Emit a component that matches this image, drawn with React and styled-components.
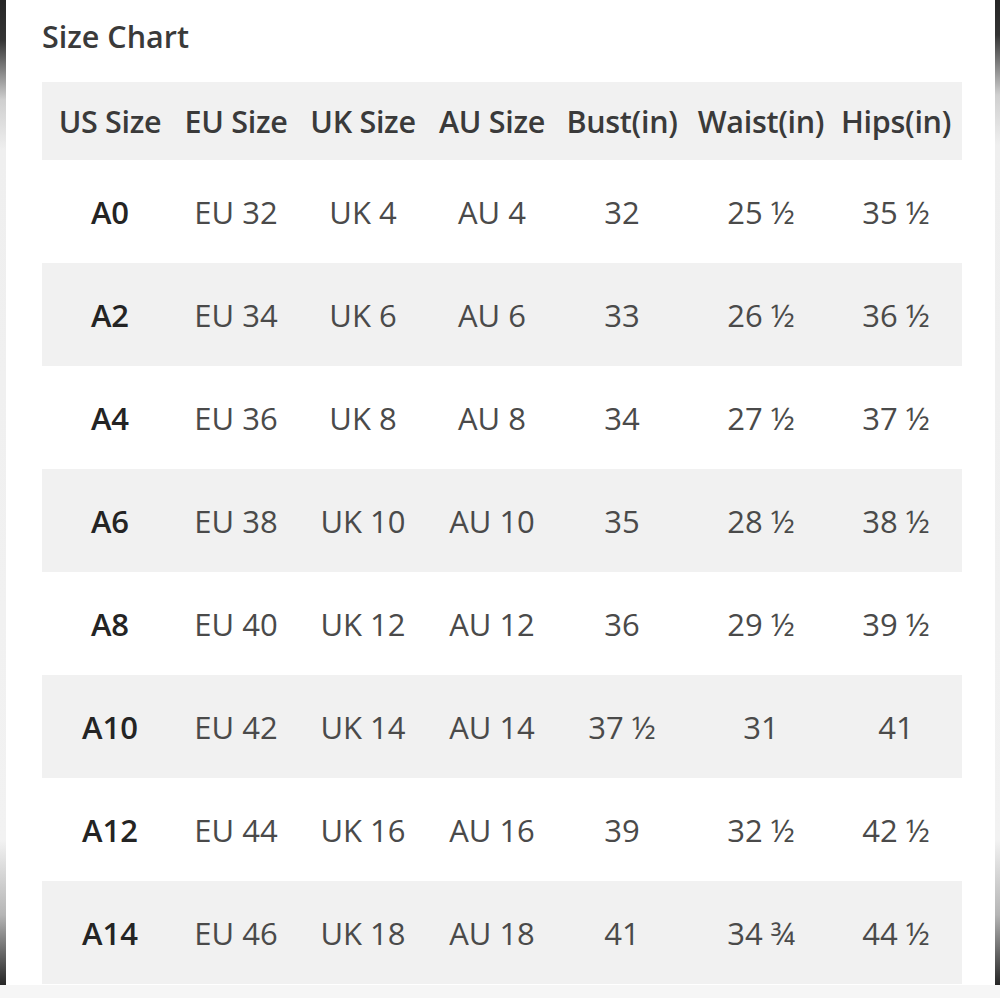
import React from 'react';
import styled, { createGlobalStyle } from 'styled-components';

const GlobalStyle = createGlobalStyle`
  html, body { margin: 0; padding: 0; background: #fff; }
  body { font-family: "Open Sans", "Noto Sans", sans-serif; }
`;

const rows = [
  ['A0', 'EU 32', 'UK 4', 'AU 4', '32', '25 ½', '35 ½'],
  ['A2', 'EU 34', 'UK 6', 'AU 6', '33', '26 ½', '36 ½'],
  ['A4', 'EU 36', 'UK 8', 'AU 8', '34', '27 ½', '37 ½'],
  ['A6', 'EU 38', 'UK 10', 'AU 10', '35', '28 ½', '38 ½'],
  ['A8', 'EU 40', 'UK 12', 'AU 12', '36', '29 ½', '39 ½'],
  ['A10', 'EU 42', 'UK 14', 'AU 14', '37 ½', '31', '41'],
  ['A12', 'EU 44', 'UK 16', 'AU 16', '39', '32 ½', '42 ½'],
  ['A14', 'EU 46', 'UK 18', 'AU 18', '41', '34 ¾', '44 ½'],
];

const columns = [
  { title: 'US Size', width: 136 },
  { title: 'EU Size', width: 116 },
  { title: 'UK Size', width: 138 },
  { title: 'AU Size', width: 120 },
  { title: 'Bust(in)', width: 140 },
  { title: 'Waist(in)', width: 138 },
  { title: 'Hips(in)', width: 132 },
];

const Screen = styled.div`
  display: flex;
  flex-direction: column;
  width: 1000px;
  height: 998px;
  overflow: hidden;
`;

const Frame = styled.div`
  display: flex;
  height: 985px;
`;

const EdgeStrip = styled.div`
  flex: 0 0 ${p => p.w}px;
  background: linear-gradient(
    to bottom,
    #262626 0px,
    #343434 ${p => p.top}px,
    #cfcfcf ${p => p.top + 60}px,
    #efefef ${p => p.top + 110}px,
    #f2f2f2 840px,
    #b5b5b5 915px,
    #3a3a3a 975px,
    #262626 985px
  );
`;

const BottomBar = styled.div`
  height: 13px;
  background: #f6f6f6;
`;

const Content = styled.div`
  flex: 1;
  padding: 16px 33px 0 36px;
`;

const Title = styled.h2`
  margin: 0 0 25px;
  font-size: 30.5px;
  line-height: 41px;
  font-weight: 600;
  color: #3a3a3a;
`;

const Table = styled.table`
  width: 920px;
  table-layout: fixed;
  border-collapse: collapse;
  border-spacing: 0;
`;

const Col = styled.col`
  width: ${p => p.w}px;
`;

const Row = styled.tr`
  background: ${p => (p.shaded ? '#f1f1f1' : '#ffffff')};
`;

const HeadCell = styled.th`
  height: 78px;
  padding: 0;
  font-size: 30.5px;
  font-weight: 600;
  color: #3a3a3a;
  text-align: center;
  white-space: nowrap;
  letter-spacing: -0.3px;
`;

const Cell = styled.td`
  height: 103px;
  padding: 0;
  font-size: 31px;
  font-weight: ${p => (p.strong ? 600 : 400)};
  color: ${p => (p.strong ? '#242424' : '#4a4a4a')};
  text-align: center;
  white-space: nowrap;
`;

export default function App() {
  return (
    <Screen>
      <GlobalStyle />
      <Frame>
        <EdgeStrip w={6} top={40} />
        <Content>
          <Title>Size Chart</Title>
          <Table>
            <colgroup>
              {columns.map(c => (
                <Col key={c.title} w={c.width} />
              ))}
            </colgroup>
            <thead>
              <Row shaded>
                {columns.map(c => (
                  <HeadCell key={c.title}>{c.title}</HeadCell>
                ))}
              </Row>
            </thead>
            <tbody>
              {rows.map((r, i) => (
                <Row key={r[0]} shaded={i % 2 === 1}>
                  {r.map((v, j) => (
                    <Cell key={j} strong={j === 0}>{v}</Cell>
                  ))}
                </Row>
              ))}
            </tbody>
          </Table>
        </Content>
        <EdgeStrip w={5} top={35} />
      </Frame>
      <BottomBar />
    </Screen>
  );
}
